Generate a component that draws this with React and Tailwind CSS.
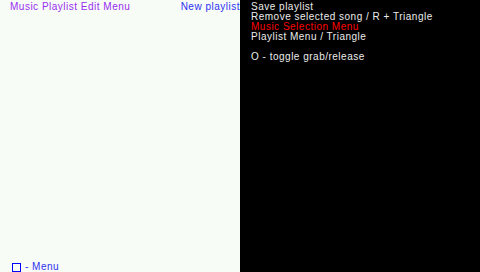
import React from 'react';

const font = { fontFamily: '"Liberation Sans", Arial, sans-serif' };

const menuItems = [
    { label: 'Save playlist', color: 'text-[#ececec]' },
    { label: 'Remove selected song / R + Triangle', color: 'text-[#ececec]' },
    { label: 'Music Selection Menu', color: 'text-[#ff0000]' },
    { label: 'Playlist Menu / Triangle', color: 'text-[#ececec]' },
];

const App = () => {
    return (
        <div className="flex w-[480px] h-[272px] overflow-hidden text-[10px] leading-[10px] tracking-[0.5px]" style={font}>
            {/* lista de canciones */}
            <div className="flex flex-col w-[240px] h-full bg-[#f7fcf7] overflow-hidden">
                <div className="flex items-start pt-[2px] whitespace-nowrap">
                    <span className="pl-[10px] text-[#9a2cf0]">Music Playlist Edit Menu</span>
                    <span className="ml-auto text-[#2f2ff5]">New playlist</span>
                </div>
                <div className="mt-auto flex items-center gap-[4px] pl-[12px]">
                    <span className="w-[9px] h-[9px] border border-[#0000ff]" />
                    <span className="text-[#3030f0]">- Menu</span>
                </div>
            </div>

            {/* opciones */}
            <div className="flex-1 h-full bg-black pt-[2px] pl-[11px] whitespace-nowrap">
                {menuItems.map((item) => (
                    <div key={item.label} className={`h-[10px] ${item.color}`}>
                        {item.label}
                    </div>
                ))}
                <div className="h-[10px]" />
                <div className="h-[10px] text-[#ececec]">O - toggle grab/release</div>
            </div>
        </div>
    );
};

export default App;
